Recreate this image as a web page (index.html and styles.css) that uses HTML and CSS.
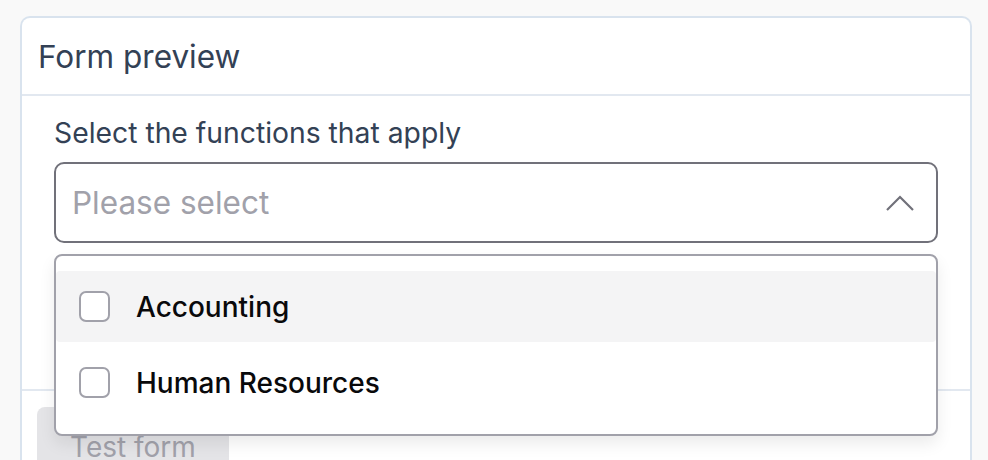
FILE: index.html
```html
<!DOCTYPE html>
<html lang="en">
  <head>
    <meta charset="UTF-8" />
    <meta name="viewport" content="width=device-width, initial-scale=1.0" />
    <title>Form preview</title>
    <link rel="stylesheet" href="styles.css">
  </head>
  <body>
    <div class="card">
      <div class="card-header">Form preview</div>

      <div class="card-body">
        <label class="field-label" for="functions">Select the functions that apply</label>
        <div class="select-wrap">
          <div class="select" id="functions">
            <span class="placeholder">Please select</span>
            <svg class="chevron" width="28" height="16" viewBox="0 0 28 16" fill="none">
              <path d="M1 15L14 2L27 15" stroke="#71717a" stroke-width="2.2" />
            </svg>
          </div>

          <div class="menu">
            <label class="option active">
              <span class="box"></span>
              Accounting
            </label>
            <label class="option">
              <span class="box"></span>
              Human Resources
            </label>
          </div>
        </div>
      </div>

      <div class="card-footer">
        <button class="btn" disabled>Test form</button>
      </div>
    </div>
  </body>
</html>
```

FILE: styles.css
```css
html {
  overflow: hidden;
}
body {
  font-family: Inter, "Noto Sans", sans-serif;
  margin: 0;
  padding: 16px 16px 0 20px;
  background-color: #f9f9f9;
  height: 460px;
  box-sizing: border-box;
  overflow: hidden;
}
.card {
  background: #fff;
  border: 2px solid #d9e3ee;
  border-bottom: none;
  border-radius: 10px 10px 0 0;
}
.card-header {
  height: 76px;
  display: flex;
  align-items: center;
  padding-left: 16px;
  font-size: 31.5px;
  color: #334155;
  border-bottom: 2px solid #e2e8f0;
}
.card-body {
  padding: 20px 32px 0 32px;
  height: 273px;
}
.field-label {
  display: block;
  font-size: 28.3px;
  color: #334155;
  margin-bottom: 12px;
}
.select-wrap {
  position: relative;
}
.select {
  height: 77px;
  border: 2px solid #71717a;
  border-radius: 10px;
  display: flex;
  align-items: center;
  justify-content: space-between;
  padding: 0 22px 0 16px;
}
.placeholder {
  font-size: 31.5px;
  color: #a1a1aa;
}
.menu {
  position: absolute;
  top: 92px;
  left: 0;
  right: 0;
  z-index: 2;
  background: #fff;
  border: 2px solid #a1a1aa;
  border-radius: 8px;
  padding: 15px 0 16px 0;
  box-shadow: 0 8px 16px rgba(0, 0, 0, 0.08);
}
.option {
  display: flex;
  align-items: center;
  height: 71px;
  padding-left: 23px;
  font-size: 28px;
  font-weight: 500;
  color: #09090b;
  border-radius: 4px;
}
.option + .option {
  margin-top: 5px;
}
.option.active {
  background: #f4f4f5;
}
.box {
  width: 27px;
  height: 27px;
  border: 2px solid #a1a1aa;
  border-radius: 7px;
  background: #fff;
  margin-right: 26px;
}
.card-footer {
  border-top: 2px solid #e2e8f0;
  padding: 16px 15px 0 15px;
  height: 53px;
  overflow: hidden;
}
.btn {
  font-family: inherit;
  font-size: 28px;
  color: #a1a1aa;
  background: #e4e4e7;
  border: none;
  border-radius: 8px;
  padding: 23px 33px;
}
```
